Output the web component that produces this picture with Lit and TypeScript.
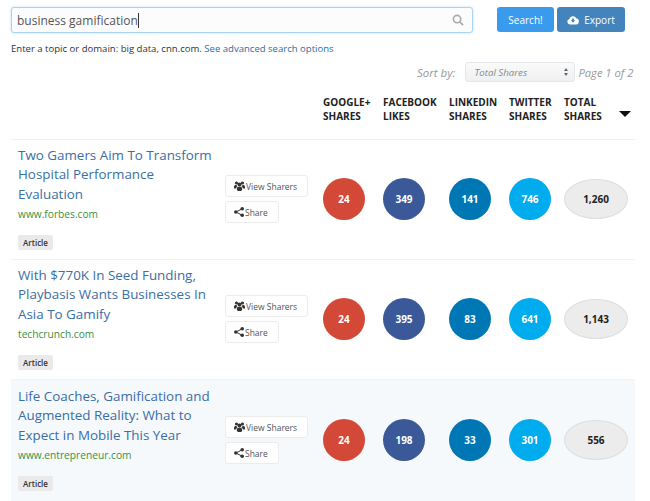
import { LitElement, html, css, svg } from "lit";
import { customElement } from "lit/decorators.js";

const rows = [
  { title: "Two Gamers Aim To Transform Hospital Performance Evaluation", url: "www.forbes.com", v: ["24", "349", "141", "746", "1,260"], hi: false },
  { title: "With $770K In Seed Funding, Playbasis Wants Businesses In Asia To Gamify", url: "techcrunch.com", v: ["24", "395", "83", "641", "1,143"], hi: false },
  { title: "Life Coaches, Gamification and Augmented Reality: What to Expect in Mobile This Year", url: "www.entrepreneur.com", v: ["24", "198", "33", "301", "556"], hi: true },
];
const heads = [["GOOGLE+", "SHARES"], ["FACEBOOK", "LIKES"], ["LINKEDIN", "SHARES"], ["TWITTER", "SHARES"], ["TOTAL", "SHARES"]];
const kinds = ["g", "f", "l", "t"];

const usersIcon = svg`<svg class="ic" viewBox="0 0 11 10" width="11" height="10" fill="#333"><circle cx="2.500" cy="2" r="1.600"/><circle cx="8.500" cy="2" r="1.600"/><circle cx="5.500" cy="3.500" r="2"/><path d="M0 6c0-1.200.7-2 1.500-2h1c.2.800.5 1.300 1 1.800-.9.300-1.400 1-1.600 1.700H0z"/><path d="M11 6c0-1.200-.7-2-1.500-2h-1c-.2.800-.5 1.300-1 1.800.9.300 1.400 1 1.600 1.700H11z"/><path d="M2.800 8c0-1.300.9-2.200 1.700-2.200h2c.8 0 1.700.9 1.700 2.200 0 1.200-.7 2-1.500 2h-2.400c-.8 0-1.500-.8-1.500-2z"/></svg>`;
const shareIcon = svg`<svg class="ic" viewBox="0 0 10 10" width="10" height="10" fill="#333"><circle cx="1.800" cy="5" r="1.800"/><circle cx="8.200" cy="1.800" r="1.800"/><circle cx="8.200" cy="8.200" r="1.800"/><path d="M1.800 5 8.200 1.800M1.800 5 8.200 8.200" stroke="#333" stroke-width="1"/></svg>`;

@customElement("app-root")
export class AppRoot extends LitElement {
  static styles = css`
    :host { display: block; width: 650px; height: 501px; overflow: hidden; background: #fff; font-family: "Open Sans", sans-serif; color: #333; }
    .top { display: flex; padding: 7px 0 0 11px; height: 26px; }
    .search { width: 462px; height: 26px; box-sizing: border-box; border: 1px solid #a9d3f5; border-radius: 3px; box-shadow: 0 0 3px #c4e1f8; background: #fcfcfc; display: flex; align-items: center; justify-content: space-between; padding: 0 8px 0 5px; font-size: 12px; color: #555; }
    .caret { display: inline-block; width: 1px; height: 15px; background: #333; vertical-align: -3px; }
    .btn { height: 25px; box-sizing: border-box; border-radius: 3px; color: #fff; font-size: 10px; display: flex; align-items: center; justify-content: center; gap: 5px; }
    .b1 { width: 57px; margin-left: 24px; background: #3a9bec; }
    .b2 { width: 68px; margin-left: 3px; background: #4384bd; }
    .help { margin: 9px 0 0 11px; font-size: 9.550px; line-height: 14px; color: #333; }
    .help a { color: #2e6da4; }
    .sort { display: flex; align-items: center; height: 20px; margin-top: 6px; font-style: italic; color: #999; font-size: 11.500px; padding-left: 417px; }
    .sel { width: 110px; height: 20px; box-sizing: border-box; margin-left: 10px; margin-right: 3px; border: 1px solid #e3e6ea; border-radius: 3px; background: linear-gradient(#fafafa, #eff0f2); font-size: 9.700px; display: flex; align-items: center; justify-content: space-between; padding: 0 6px 0 8px; color: #888; }
    .page { font-size: 11.200px; }
    .arrows { display: flex; flex-direction: column; gap: 2px; }
    .up { width: 0; height: 0; border: 2.500px solid transparent; border-top: 0; border-bottom: 3.500px solid #666; }
    .dn { width: 0; height: 0; border: 2.500px solid transparent; border-bottom: 0; border-top: 3.500px solid #666; }
    .grid { display: grid; grid-template-columns: 214px 98px 60px 66px 60px 55px 1fr; margin-left: 11px; width: 624px; }
    .row.grid { grid-template-columns: 207px 98px 60px 66px 60px 55px 1fr; }
    .head { margin-top: 13px; height: 45px; box-sizing: border-box; padding-top: 0; font-size: 10px; font-weight: 700; line-height: 14px; color: #222; border-bottom: 1px solid #f0f0f0; }
    .total { position: relative; }
    .sortarrow { position: absolute; right: 4px; top: 16px; width: 0; height: 0; border: 6px solid transparent; border-bottom: 0; border-top: 6px solid #111; }
    .row { height: 120px; box-sizing: border-box; padding: 6px 0 0 7px; border-bottom: 1px solid #f3f3f3; align-items: start; }
    .row.hi { background: #f5f9fc; height: 121px; padding-top: 7px; border-bottom: 0; }
    .main { width: 200px; }
    .title { font-size: 13.400px; line-height: 19.300px; color: #3a6ea5; }
    .url { font-size: 10.200px; line-height: 20px; color: #3c8f3c; }
    .tag { display: inline-block; margin-top: 11px; background: #eaeaea; border-radius: 2px; font-size: 8px; font-weight: 600; line-height: 15px; padding: 0 5px; color: #333; }
    .acts { display: flex; flex-direction: column; align-items: flex-start; gap: 4px; padding-top: 29px; }
    .act { height: 22px; box-sizing: border-box; display: flex; align-items: center; gap: 1px; padding: 0 10px 0 8px; background: #fff; border: 1px solid #ececec; border-radius: 3px; font-size: 8.500px; color: #555; }
    .ic { flex: none; }
    .ball { width: 42px; height: 42px; margin-top: 32px; border-radius: 50%; display: flex; align-items: center; justify-content: center; color: #fff; font-size: 10px; font-weight: 700; }
    .g { background: #d34836; }
    .f { background: #3b5998; }
    .l { background: #0077b5; }
    .t { background: #00aced; }
    .sum { width: 64px; height: 40px; margin-top: 33px; border-radius: 50%; box-sizing: border-box; border: 1px solid #ddd; background: #ececec; display: flex; align-items: center; justify-content: center; color: #222; font-size: 10px; font-weight: 700; }
  `;

  render() {
    return html`
      <div class="top">
        <div class="search"><span>business gamification<span class="caret"></span></span>
          <svg width="12" height="12" viewBox="0 0 13 13" fill="none" stroke="#aaa" stroke-width="1.800"><circle cx="5.500" cy="5.500" r="4"/><path d="M8.500 8.500 12 12"/></svg>
        </div>
        <div class="btn b1">Search!</div>
        <div class="btn b2">
          <svg width="12" height="10" viewBox="0 0 12 10"><path fill="#fff" d="M3 9.500a2.800 2.800 0 0 1-.6-5.500A3.700 3.700 0 0 1 9.300 3.200 3.200 3.200 0 0 1 9.200 9.500z"/><path fill="#4384bd" d="M6 7.800 8.200 5.300H6.900V3.400H5.100v1.900H3.800z"/></svg>
          Export
        </div>
      </div>
      <div class="help">Enter a topic or domain: big data, cnn.com. <a>See advanced search options</a></div>
      <div class="sort">Sort by:
        <div class="sel"><span>Total Shares</span><span class="arrows"><i class="up"></i><i class="dn"></i></span></div>
        <span class="page">Page 1 of 2</span>
      </div>
      <div class="grid head">
        <div></div><div></div>
        ${heads.map((h, i) => html`<div class=${i === 4 ? "total" : ""}>${h[0]}<br />${h[1]}${i === 4 ? html`<i class="sortarrow"></i>` : ""}</div>`)}
      </div>
      ${rows.map(r => html`
        <div class="grid row ${r.hi ? "hi" : ""}">
          <div class="main">
            <div class="title">${r.title}</div>
            <div class="url">${r.url}</div>
            <span class="tag">Article</span>
          </div>
          <div class="acts">
            <div class="act">${usersIcon} View Sharers</div>
            <div class="act">${shareIcon} Share</div>
          </div>
          ${kinds.map((k, i) => html`<div class="ball ${k}">${r.v[i]}</div>`)}
          <div class="sum">${r.v[4]}</div>
        </div>`)}
    `;
  }
}
